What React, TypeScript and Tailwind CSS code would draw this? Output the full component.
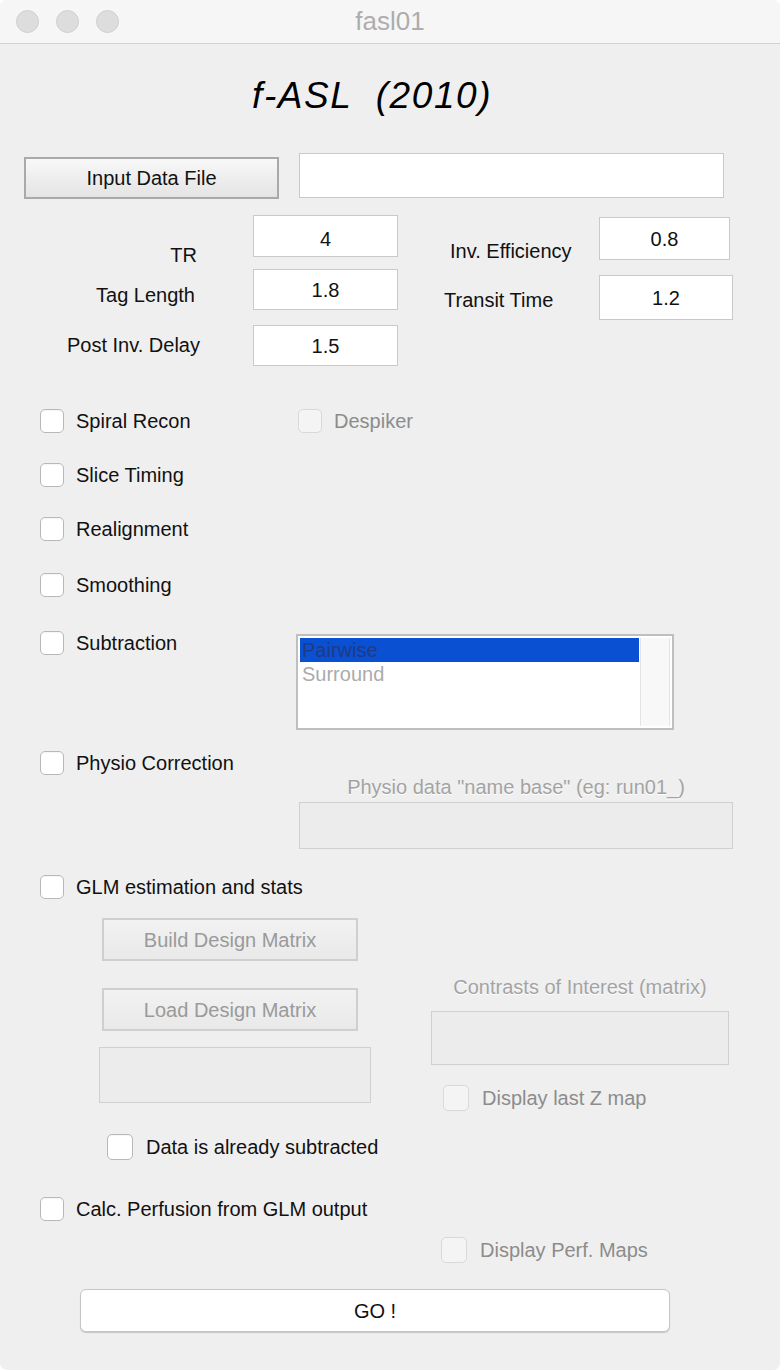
import React from 'react';

type CheckProps = {
  label: string;
  disabled?: boolean;
  big?: boolean;
};

const CheckBox = ({ label, disabled, big }: CheckProps) => {
  return (
    <div className="flex items-center">
      <span
        className={`block shrink-0 rounded-[5px] border ${
          big ? 'w-[26px] h-[26px]' : 'w-[24px] h-[24px]'
        } ${
          disabled
            ? 'bg-[#f4f4f4] border-[#d9d9d9]'
            : 'bg-white border-[#b8b8b8] shadow-[inset_0_1px_1px_rgba(0,0,0,0.04)]'
        }`}
      />
      <span
        className={`${big ? 'ml-[13px]' : 'ml-[12px]'} text-[20px] leading-[24px] whitespace-nowrap ${
          disabled ? 'text-[#8c8c8c]' : 'text-[#111]'
        }`}>
        {label}
      </span>
    </div>
  );
};

const Field = ({ value, className }: { value?: string; className: string }) => {
  return (
    <div
      className={`bg-white border border-[#c9c9c9] flex items-center justify-center text-[20px] text-[#111] ${className}`}>
      {value}
    </div>
  );
};

const App = () => {
  return (
    <div className="w-[780px] h-[1370px] bg-white font-['Liberation_Sans',Arial,sans-serif]">
      <div className="w-[780px] h-[1370px] rounded-[7px] overflow-hidden bg-[#efefef] flex flex-col">
        {/* title bar */}
        <div className="h-[44px] shrink-0 bg-[#f6f6f6] border-b border-[#d2d2d2] flex items-center relative">
          <div className="flex gap-[17px] pl-[16px]">
            <span className="block w-[23px] h-[23px] rounded-full bg-[#dddddd] border border-[#d0d0d0]" />
            <span className="block w-[23px] h-[23px] rounded-full bg-[#dddddd] border border-[#d0d0d0]" />
            <span className="block w-[23px] h-[23px] rounded-full bg-[#dddddd] border border-[#d0d0d0]" />
          </div>
          <div className="absolute inset-0 flex items-center justify-center text-[26px] text-[#adadad] pointer-events-none">
            fasl01
          </div>
        </div>

        {/* heading */}
        <div className="mt-[30px] pl-[252px] h-[44px] leading-[44px] text-[37px] tracking-[1.6px] italic text-black whitespace-pre">
          {'f-ASL  (2010)'}
        </div>

        {/* input file */}
        <div className="mt-[35px] flex items-start">
          <button className="mt-[4px] ml-[24px] w-[255px] h-[42px] border-2 border-[#a9a9a9] bg-linear-to-b from-[#f8f8f8] to-[#e4e4e4] text-[20px] text-[#111]">
            Input Data File
          </button>
          <Field className="ml-[20px] w-[425px] h-[45px]" />
        </div>

        {/* parameters */}
        <div className="mt-[16px] h-[151px] flex items-start">
          <div className="w-[444px] shrink-0 flex flex-col">
            <div className="flex h-[42px]">
              <div className="w-[253px] h-[42px] pr-[56px] pt-[28px] text-right text-[20px] leading-[24px] text-[#111] overflow-visible">
                TR
              </div>
              <Field value="4" className="w-[145px] h-[42px] items-start pt-[8px]" />
            </div>
            <div className="flex h-[41px] mt-[12px]">
              <div className="w-[253px] h-[41px] pr-[58px] pt-[14px] text-right text-[20px] leading-[24px] text-[#111]">
                Tag Length
              </div>
              <Field value="1.8" className="w-[145px] h-[41px]" />
            </div>
            <div className="flex h-[41px] mt-[15px]">
              <div className="w-[253px] h-[41px] pr-[53px] pt-[8px] text-right text-[20px] leading-[24px] text-[#111]">
                Post Inv. Delay
              </div>
              <Field value="1.5" className="w-[145px] h-[41px]" />
            </div>
          </div>
          <div className="flex flex-col">
            <div className="flex h-[43px] mt-[2px]">
              <div className="w-[155px] h-[43px] pl-[6px] pt-[22px] text-[20px] leading-[24px] text-[#111] whitespace-nowrap">
                Inv. Efficiency
              </div>
              <Field value="0.8" className="w-[131px] h-[43px]" />
            </div>
            <div className="flex h-[45px] mt-[15px]">
              <div className="w-[155px] h-[45px] pt-[13px] text-[20px] leading-[24px] text-[#111] whitespace-nowrap">
                Transit Time
              </div>
              <Field value="1.2" className="w-[134px] h-[45px]" />
            </div>
          </div>
        </div>

        {/* options */}
        <div className="mt-[43px] flex items-center">
          <div className="w-[298px] pl-[40px]">
            <CheckBox label="Spiral Recon" />
          </div>
          <CheckBox label="Despiker" disabled />
        </div>
        <div className="mt-[30px] pl-[40px]">
          <CheckBox label="Slice Timing" />
        </div>
        <div className="mt-[30px] pl-[40px]">
          <CheckBox label="Realignment" />
        </div>
        <div className="mt-[32px] pl-[40px]">
          <CheckBox label="Smoothing" />
        </div>

        <div className="mt-[34px] flex items-start">
          <div className="w-[296px] pl-[40px]">
            <CheckBox label="Subtraction" />
          </div>
          <div className="mt-[3px] w-[378px] h-[96px] border-2 border-[#bfbfbf] bg-white flex p-[2px]">
            <div className="flex-1 flex flex-col">
              <div className="h-[24px] leading-[24px] bg-[#0a50d2] text-[20px] text-[#1e3b86] pl-[2px]">Pairwise</div>
              <div className="h-[24px] leading-[24px] text-[20px] text-[#ababab] pl-[2px]">Surround</div>
            </div>
            <div className="w-[30px] bg-[#f8f8f8] border-l border-r border-[#e4e4e4] ml-[1px]" />
          </div>
        </div>

        <div className="mt-[21px] pl-[40px]">
          <CheckBox label="Physio Correction" />
        </div>
        <div className="ml-[299px] w-[434px] flex flex-col">
          <div className="h-[24px] leading-[24px] text-center text-[20px] text-[#a3a3a3] [text-shadow:0_1px_0_#ffffff]">
            Physio data "name base" (eg: run01_)
          </div>
          <div className="mt-[3px] h-[47px] bg-[#ececec] border border-[#d0d0d0]" />
        </div>

        <div className="mt-[26px] pl-[40px]">
          <CheckBox label="GLM estimation and stats" />
        </div>
        <div className="mt-[19px] flex items-start">
          <div className="ml-[99px] w-[272px] flex flex-col">
            <button className="ml-[3px] w-[256px] h-[43px] border-2 border-[#cfcfcf] bg-linear-to-b from-[#f2f2f2] to-[#e9e9e9] text-[20px] text-[#9a9a9a]">
              Build Design Matrix
            </button>
            <button className="mt-[27px] ml-[3px] w-[256px] h-[43px] border-2 border-[#cfcfcf] bg-linear-to-b from-[#f2f2f2] to-[#e9e9e9] text-[20px] text-[#9a9a9a]">
              Load Design Matrix
            </button>
            <div className="mt-[16px] w-[272px] h-[56px] bg-[#ececec] border border-[#d0d0d0]" />
          </div>
          <div className="ml-[60px] w-[298px] flex flex-col">
            <div className="mt-[57px] h-[24px] leading-[24px] text-center text-[20px] text-[#a3a3a3] whitespace-nowrap [text-shadow:0_1px_0_#ffffff]">
              Contrasts of Interest (matrix)
            </div>
            <div className="mt-[12px] h-[54px] bg-[#ececec] border border-[#d0d0d0]" />
            <div className="mt-[20px] ml-[12px]">
              <CheckBox label="Display last Z map" disabled big />
            </div>
          </div>
        </div>

        <div className="mt-[23px] pl-[107px]">
          <CheckBox label="Data is already subtracted" big />
        </div>
        <div className="mt-[37px] pl-[40px]">
          <CheckBox label="Calc. Perfusion from GLM output" />
        </div>
        <div className="mt-[16px] pl-[441px]">
          <CheckBox label="Display Perf. Maps" disabled big />
        </div>

        <div className="mt-[26px] pl-[80px]">
          <button className="w-[590px] h-[43px] rounded-[6px] bg-white border border-[#c6c6c6] shadow-[0_1px_1px_rgba(0,0,0,0.18)] text-[20px] text-[#111]">
            GO !
          </button>
        </div>
      </div>
    </div>
  );
};

export default App;
